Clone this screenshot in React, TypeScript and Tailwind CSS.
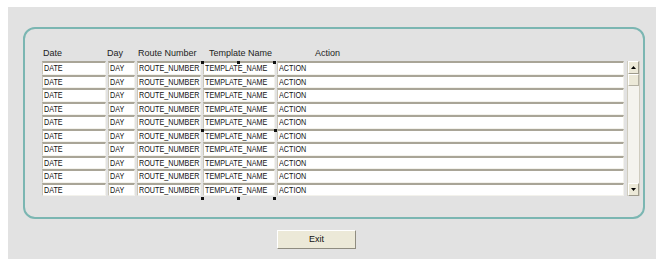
import React from "react";

const ROWS = Array.from({ length: 10 });

const cell =
    "h-full border-t-2 border-t-[#a9a597] border-l border-l-[#c9c6b9] border-b border-b-[#f3f2ec] border-r border-r-[#f3f2ec] bg-white pl-[1px] leading-[11px] text-[#111] overflow-hidden whitespace-nowrap";

function Handle({ className }: { className: string }) {
    return <div className={`absolute w-[3px] h-[3px] bg-[#111] ${className}`} />;
}

function Cell({ width, text }: { width: string; text: string }) {
    return (
        <div className={`${cell} ${width}`}>
            <span className="inline-block origin-left scale-x-[0.8]">{text}</span>
        </div>
    );
}

export default function App() {
    return (
        <div
            className="w-[661px] h-[259px] bg-white overflow-hidden"
            style={{ fontFamily: "'Liberation Sans', Arial, sans-serif" }}
        >
            <div className="ml-[8px] mt-[7px] w-[648px] h-[252px] bg-[#e2e2e2] pt-[20px] pl-[15px]">
                {/* パネル */}
                <div className="relative w-[622px] h-[192px] border-2 border-[#7bb6b2] rounded-[12px] pt-[17px] pl-[17px]">
                    {/* ヘッダー */}
                    <div className="flex h-[14px] text-[9px] text-[#222] leading-[14px]">
                        <span className="w-[65px] pl-[1px]">Date</span>
                        <span className="w-[31px]">Day</span>
                        <span className="w-[71px]">Route Number</span>
                        <span className="w-[106px]">Template Name</span>
                        <span>Action</span>
                    </div>

                    {/* 一覧 */}
                    <div className="flex mt-[1px]">
                        <div className="flex flex-col text-[9px]">
                            {ROWS.map((_, i) => (
                                <div key={i} className="flex gap-[2px] h-[13.5px]">
                                    <Cell width="w-[64px]" text="DATE" />
                                    <Cell width="w-[27px]" text="DAY" />
                                    <Cell width="w-[64px]" text="ROUTE_NUMBER" />
                                    <Cell width="w-[72px]" text="TEMPLATE_NAME" />
                                    <Cell width="w-[347px]" text="ACTION" />
                                </div>
                            ))}
                        </div>

                        {/* スクロールバー */}
                        <div className="ml-[3px] w-[13px] h-[135px] flex flex-col bg-[#f4f3ee] border-x border-[#cfccbf]">
                            <div className="h-[13px] bg-[#ece9d8] border border-t-white border-l-white border-b-[#9d9a8c] border-r-[#9d9a8c] flex items-center justify-center">
                                <svg width="5" height="3" viewBox="0 0 5 3"><path d="M2.5 0 L5 3 L0 3 Z" fill="#000" /></svg>
                            </div>
                            <div className="h-[12px] bg-[#ece9d8] border border-t-white border-l-white border-b-[#b3b0a2] border-r-[#b3b0a2]" />
                            <div className="flex-1" />
                            <div className="h-[13px] bg-[#ece9d8] border border-t-white border-l-white border-b-[#9d9a8c] border-r-[#9d9a8c] flex items-center justify-center">
                                <svg width="5" height="3" viewBox="0 0 5 3"><path d="M0 0 L5 0 L2.5 3 Z" fill="#000" /></svg>
                            </div>
                        </div>
                    </div>

                    {/* 選択ハンドル */}
                    <Handle className="left-[176px] top-[32px]" />
                    <Handle className="left-[212px] top-[32px]" />
                    <Handle className="left-[248px] top-[32px]" />
                    <Handle className="left-[176px] top-[100px]" />
                    <Handle className="left-[249px] top-[100px]" />
                    <Handle className="left-[176px] top-[168px]" />
                    <Handle className="left-[212px] top-[168px]" />
                    <Handle className="left-[248px] top-[168px]" />
                </div>

                {/* 終了ボタン */}
                <div className="mt-[6px] pl-[254px]">
                    <button
                        type="button"
                        className="w-[79px] h-[19px] bg-[#ece9d8] border border-t-white border-l-white border-b-[#8f8c80] border-r-[#8f8c80] text-[9px] text-[#111] leading-[17px]"
                    >
                        Exit
                    </button>
                </div>
            </div>
        </div>
    );
}
